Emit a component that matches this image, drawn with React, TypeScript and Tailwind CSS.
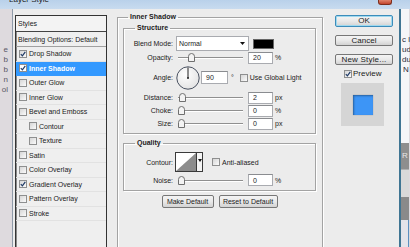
import React from "react";

const styleRows = [
	{ label: "Drop Shadow", on: true },
	{ label: "Inner Shadow", on: true, selected: true },
	{ label: "Outer Glow" },
	{ label: "Inner Glow" },
	{ label: "Bevel and Emboss" },
	{ label: "Contour", indent: true },
	{ label: "Texture", indent: true },
	{ label: "Satin" },
	{ label: "Color Overlay" },
	{ label: "Gradient Overlay", on: true },
	{ label: "Pattern Overlay" },
	{ label: "Stroke" },
];

const etched = "border border-[#a3a3a3] shadow-[inset_1px_1px_0_#fff,1px_1px_0_#fff]";

function Check({ on, className = "" }: { on?: boolean; className?: string }) {
	return (
		<span
			className={`flex h-[8px] w-[8px] shrink-0 items-center justify-center border border-[#8e8f8f] bg-linear-to-br from-[#d6d6d6] to-[#fbfbfb] ${className}`}
		>
			{on && (
				<svg width="6" height="6" viewBox="0 0 6 6">
					<path d="M0.8 3.2 L2.4 4.9 L5.3 0.8" fill="none" stroke="#1f3a66" strokeWidth="1.2" />
				</svg>
			)}
		</span>
	);
}

function Num({ value, w = "w-[25px]", h = "h-[12px]" }: { value: string; w?: string; h?: string }) {
	return (
		<span className={`flex ${h} ${w} shrink-0 items-center border border-[#a9abb0] border-t-[#8a8c90] bg-white pl-[4px]`}>
			{value}
		</span>
	);
}

function Slider({ at }: { at: number }) {
	return (
		<div className="relative ml-[2px] h-[9px] w-[65px] shrink-0">
			<div className="absolute left-0 right-0 top-[4px] h-px bg-[#8f8f8f] shadow-[0_1px_0_#fff]" />
			<svg className="absolute top-0" style={{ left: `${at}px` }} width="7" height="9" viewBox="0 0 7 9">
				<path d="M0.5 8.5V3.5A3 3 0 0 1 6.5 3.5V8.5Z" fill="#f3f3f3" stroke="#6f6f6f" />
			</svg>
		</div>
	);
}

function Row({ label, h, children }: { label: string; h: string; children: React.ReactNode }) {
	return (
		<div className={`flex items-center ${h}`}>
			<span className="w-[49px] shrink-0 text-right">{label}</span>
			<div className="ml-[3px] flex items-center">{children}</div>
		</div>
	);
}

function SliderRow({ label, at, value, unit, h = "h-[13px]" }: { label: string; at: number; value: string; unit: string; h?: string }) {
	return (
		<Row label={label} h={h}>
			<Slider at={at} />
			<span className="ml-[5px]">
				<Num value={value} />
			</span>
			<span className="ml-[2px]">{unit}</span>
		</Row>
	);
}

function Btn({ children, className = "", primary }: { children: React.ReactNode; className?: string; primary?: boolean }) {
	return (
		<button
			type="button"
			className={`flex items-center justify-center rounded-[2px] border bg-linear-to-b from-[#f4f4f4] via-[#e9e9e9] to-[#d3d3d3] text-[#1b1b1b] ${
				primary ? "border-[#3c8cba] shadow-[inset_0_0_0_1px_#9fd9ef]" : "border-[#777]"
			} ${className}`}
		>
			{children}
		</button>
	);
}

function StylesPanel() {
	return (
		<div className="h-[245px] w-[92px] shrink-0 border border-[#333] bg-[#efefef] shadow-[inset_1px_1px_0_#8a8a8a]">
			<div className="flex h-[16px] items-center border-b border-[#444] bg-[#f3f3f3] pl-[2px]">Styles</div>
			<div className="flex h-[15px] items-center border-b border-[#a0a0a0] pl-[2px]">Blending Options: Default</div>
			{styleRows.map((r) => (
				<div
					key={r.label}
					className={`flex h-[14.5px] items-center border-b ${
						r.selected ? "border-[#3399ff] bg-[#3399ff] font-bold text-white" : "border-[#e2e2e2]"
					} ${r.indent ? "pl-[13px]" : "pl-[3px]"}`}
				>
					<Check on={r.on} className={r.selected ? "bg-none bg-white" : ""} />
					<span className="ml-[2px]">{r.label}</span>
				</div>
			))}
		</div>
	);
}

function InnerShadow() {
	return (
		<fieldset className={`-mt-[2px] ml-[10px] h-[240px] w-[206px] shrink-0 pl-[5px] pr-[6px] ${etched}`}>
			<legend className="ml-[5px] px-[2px] font-bold leading-[8px]">Inner Shadow</legend>
			<fieldset className={`mt-[3px] pb-[3px] pt-[4px] ${etched}`}>
				<legend className="ml-[11px] px-[2px] font-bold leading-[8px]">Structure</legend>
				<Row label="Blend Mode:" h="h-[15px]">
					<span className="flex h-[15px] w-[73px] items-center justify-between border border-[#a9abb0] bg-white pl-[2px] pr-[3px]">
						Normal
						<svg width="5" height="3" viewBox="0 0 5 3">
							<path d="M0 0H5L2.5 3Z" fill="#111" />
						</svg>
					</span>
					<span className="ml-[4px] h-[10px] w-[21px] border border-[#666] bg-black" />
				</Row>
				<SliderRow label="Opacity:" at={10} value="20" unit="%" />
				<Row label="Angle:" h="h-[27px]">
					<svg width="24" height="24" viewBox="0 0 24 24">
						<defs>
							<radialGradient id="dialFill" cx="40%" cy="35%" r="70%">
								<stop offset="0" stopColor="#ffffff" />
								<stop offset="1" stopColor="#e2e2e2" />
							</radialGradient>
						</defs>
						<circle cx="12" cy="12" r="11.2" fill="url(#dialFill)" stroke="#4a5261" strokeWidth="1" />
						<line x1="12" y1="12" x2="12" y2="1.5" stroke="#222" strokeWidth="1" />
						<circle cx="12" cy="12" r="1" fill="#222" />
					</svg>
					<span className="ml-[1px]">
						<Num value="90" w="w-[27px]" h="h-[13px]" />
					</span>
					<span className="ml-[3px]">°</span>
					<Check className="ml-[6px]" />
					<span className="ml-[2px]">Use Global Light</span>
				</Row>
				<SliderRow label="Distance:" at={1} value="2" unit="px" />
				<SliderRow label="Choke:" at={0} value="0" unit="%" />
				<SliderRow label="Size:" at={0} value="0" unit="px" />
			</fieldset>
			<fieldset className={`mt-[5px] pb-[4px] pt-[5px] ${etched}`}>
				<legend className="ml-[11px] px-[2px] font-bold leading-[8px]">Quality</legend>
				<div className="flex h-[20px] items-center">
					<span className="w-[49px] shrink-0 text-right">Contour:</span>
					<div className="ml-[2px] flex h-[20px] w-[28px] border border-[#3a3a3a] bg-white">
						<svg width="20" height="18" viewBox="0 0 20 18" className="shrink-0">
							<path d="M0 18L20 0V18Z" fill="#8c8c8c" />
						</svg>
						<div className="flex flex-1 justify-center border-l border-[#3a3a3a] bg-[#f4f4f4] pt-[6px]">
							<svg width="4" height="3" viewBox="0 0 4 3">
								<path d="M0 0H4L2 3Z" fill="#111" />
							</svg>
						</div>
					</div>
					<Check className="ml-[9px]" />
					<span className="ml-[2px]">Anti-aliased</span>
				</div>
				<div className="mt-[2px]">
					<SliderRow label="Noise:" at={0} value="0" unit="%" h="h-[12px]" />
				</div>
			</fieldset>
			<div className="mt-[4px] flex justify-center gap-[5px]">
				<Btn className="h-[13px] w-[52px]">Make Default</Btn>
				<Btn className="h-[13px] w-[59px]">Reset to Default</Btn>
			</div>
		</fieldset>
	);
}

function RightColumn() {
	return (
		<div className="ml-[12px] flex w-[58px] shrink-0 flex-col text-[8px]">
			<Btn primary className="h-[12px]">OK</Btn>
			<Btn className="mt-[8px] h-[11px]">Cancel</Btn>
			<Btn className="mt-[8px] h-[11px] tracking-[0.2px]">New Style...</Btn>
			<div className="mt-[5px] flex h-[8px] items-center pl-[9px]">
				<Check on />
				<span className="ml-[1px]">Preview</span>
			</div>
			<div className="ml-[6px] mt-[5px] flex h-[43px] w-[43px] items-center justify-center bg-[#d5d5d5]">
				<div className="h-[20px] w-[20px] bg-[#3d95f6] shadow-[inset_1px_1px_2px_rgba(0,0,0,0.35),0_0_1px_rgba(0,0,0,0.3)]" />
			</div>
		</div>
	);
}

export default function App() {
	return (
		<div className="flex h-[247px] w-[410px] flex-col overflow-hidden bg-[#dedade] text-[7px] leading-none text-[#1b1b1b] [font-family:'Liberation_Sans',Arial,sans-serif]">
			<div className="flex h-[9px] shrink-0 items-start overflow-hidden bg-linear-to-b from-[#b9d1ea] to-[#c8dbef]">
				<span className="-mt-[4px] ml-[9px] text-[8px] leading-[8px] text-[#222]">Layer Style</span>
				<span className="ml-auto mr-[18px] h-[5px] w-[14px] rounded-b-[3px] border border-t-0 border-[#7d2d1c] bg-linear-to-b from-[#e0836b] to-[#c2432c]" />
			</div>
			<div className="flex min-h-0 flex-1">
				<div className="flex w-[13px] shrink-0 flex-col items-end border-r border-[#8e9aa8] pr-[4px] pt-[36px] text-[8px] leading-[10px] text-[#5a5866]">
					<span>e</span>
					<span>b</span>
					<span>b</span>
					<span>n</span>
					<span>ol</span>
				</div>
				<div className="flex w-[388px] shrink-0 items-start overflow-hidden border-r-2 border-[#3f7593] bg-[#ececec] pl-[2px] pt-[6px]">
					<StylesPanel />
					<InnerShadow />
					<RightColumn />
				</div>
				<div className="flex w-[8px] shrink-0 flex-col bg-[#f5f6f8] text-[8px] leading-[10px] text-[#2a2a38]">
					<div className="h-[26px] shrink-0" />
					<span className="whitespace-nowrap pl-px">c l</span>
					<span className="pl-px">ud</span>
					<span className="pl-px">du</span>
					<span className="pl-[2px]">N</span>
					<div className="h-[68px] shrink-0" />
					<div className="flex h-[26px] shrink-0 items-center bg-[#8e8e8e] pl-px text-[#e8e8e8]">R</div>
					<div className="h-[28px] shrink-0 border-t border-[#b0b0b0] bg-[#d9d9d9]" />
					<div className="h-[23px] shrink-0 bg-[#8a8a8a]" />
					<div className="flex-1 border-r border-[#5d8fc0] bg-[#e4e4ea]" />
				</div>
			</div>
		</div>
	);
}
